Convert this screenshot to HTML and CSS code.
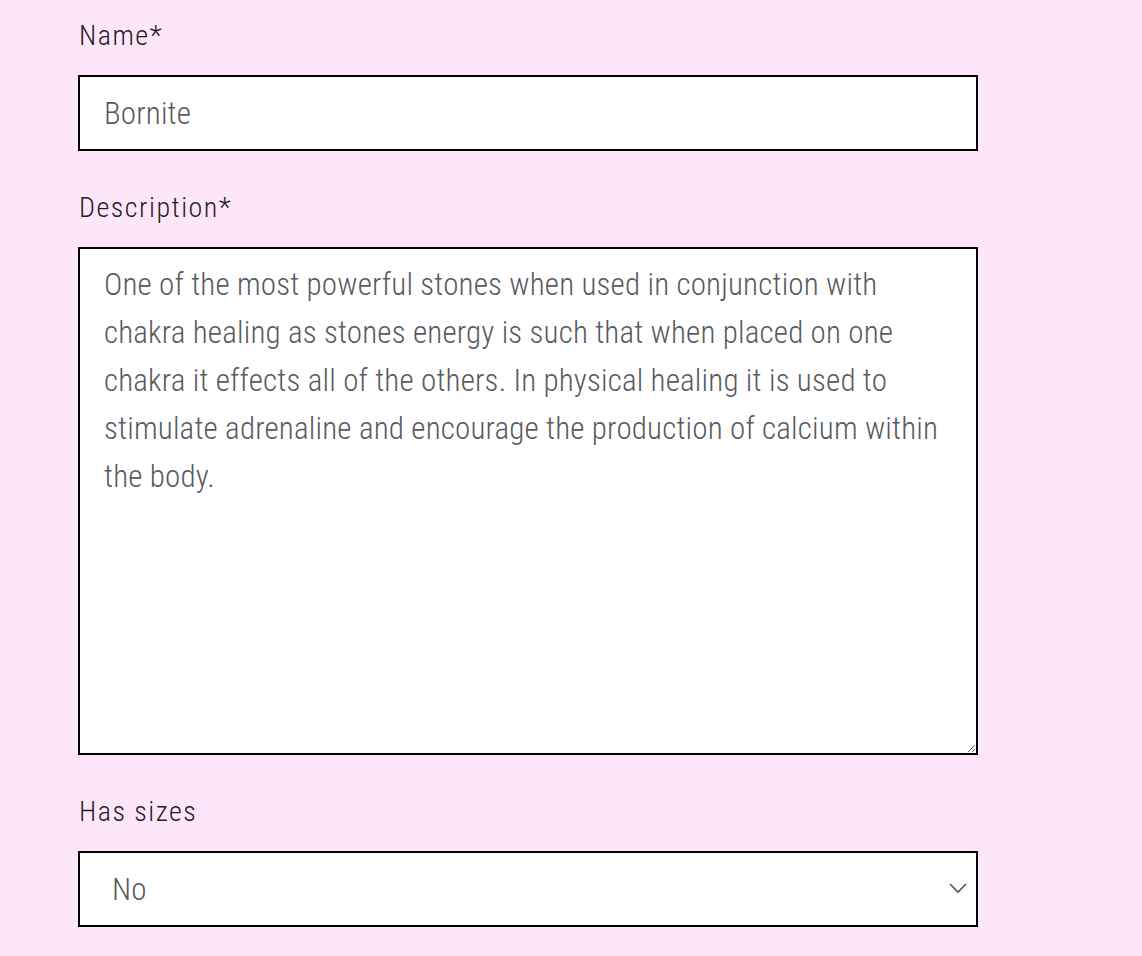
FILE: index.html
```html
<!DOCTYPE html>
<html lang="en">
<head>
<meta charset="utf-8">
<title>Edit product</title>
<link rel="stylesheet" href="styles.css">
</head>
<body>
<form class="form">
  <div class="group">
    <label class="label" for="name">Name*</label>
    <input class="control" id="name" type="text" value="Bornite">
  </div>
  <div class="group">
    <label class="label" for="desc">Description*</label>
    <textarea class="control area" id="desc">One of the most powerful stones when used in conjunction with chakra healing as stones energy is such that when placed on one chakra it effects all of the others. In physical healing it is used to stimulate adrenaline and encourage the production of calcium within the body.</textarea>
  </div>
  <div class="group">
    <label class="label" for="sizes">Has sizes</label>
    <div class="select-wrap">
      <select class="control select" id="sizes">
        <option>No</option>
        <option>Yes</option>
      </select>
      <svg class="chev" width="20" height="12" viewBox="0 0 20 12" aria-hidden="true"><path d="M2 2 L10 10 L18 2" fill="none" stroke="#555" stroke-width="1.6"/></svg>
    </div>
  </div>
</form>
</body>
</html>
```
FILE: styles.css
```css
html, body {
  margin: 0;
  padding: 0;
  background: #fde6f9;
}
body {
  font-family: "Roboto Condensed", Roboto, "Liberation Sans", sans-serif;
  font-weight: 300;
}
.form {
  width: 900px;
  margin-left: 78px;
  padding-top: 15px;
}
.group {
  display: flex;
  flex-direction: column;
  margin-bottom: 36px;
}
.label {
  font-size: 28px;
  line-height: 42px;
  letter-spacing: 1.5px;
  color: #1e1e1e;
  margin-bottom: 18px;
  padding-left: 1px;
}
.control {
  box-sizing: border-box;
  width: 900px;
  height: 76px;
  border: 2px solid #000;
  border-radius: 0;
  background: #fff;
  color: #575b5f;
  font-family: inherit;
  font-weight: 300;
  font-size: 31px;
  letter-spacing: 0.18px;
  padding: 0 24px;
  margin: 0;
  outline: none;
}
.area {
  height: 508px;
  line-height: 48px;
  padding: 12px 24px;
  resize: vertical;
  display: block;
}
.select-wrap {
  position: relative;
  width: 900px;
}
.select {
  appearance: none;
  -webkit-appearance: none;
  padding-left: 32px;
  display: block;
}
.chev {
  position: absolute;
  right: 10px;
  top: 31px;
  pointer-events: none;
}
```
